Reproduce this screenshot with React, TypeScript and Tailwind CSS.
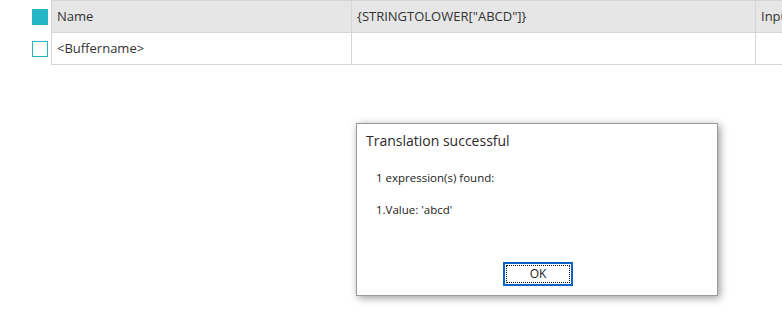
const App = () => {
  return (
    <div
      className="relative w-[782px] h-[320px] overflow-hidden bg-white text-[#333]"
      style={{ fontFamily: '"Open Sans", "Noto Sans", sans-serif' }}
    >
      {/* grid */}
      <div className="flex">
        <div className="w-[51px] shrink-0 flex flex-col">
          <div className="h-[33px] flex items-center pl-[32px]">
            <div className="w-4 h-4 bg-[#22b6c6]" />
          </div>
          <div className="h-[32px] flex items-center pl-[32px]">
            <div className="w-4 h-4 border border-[#22b6c6] bg-white" />
          </div>
        </div>
        <div className="flex flex-col border-l border-[#d6d6d6] shrink-0">
          <div className="flex h-[33px] bg-[#e6e6e6] border-t border-b border-[#d6d6d6] text-[13px]">
            <div className="w-[300px] px-[5px] flex items-center border-r border-[#d6d6d6]">Name</div>
            <div className="w-[404px] px-[5px] flex items-center border-r border-[#d6d6d6]">
              {'{STRINGTOLOWER["ABCD"]}'}
            </div>
            <div className="w-[120px] px-[5px] flex items-center">Input</div>
          </div>
          <div className="flex h-[32px] border-b border-[#d6d6d6] text-[13px]">
            <div className="w-[300px] px-[5px] flex items-center border-r border-[#d6d6d6]">
              {"<Buffername>"}
            </div>
            <div className="w-[404px] border-r border-[#d6d6d6]" />
            <div className="w-[120px]" />
          </div>
        </div>
      </div>

      {/* dialog */}
      <div className="absolute left-[356px] top-[123px] w-[362px] h-[173px] bg-white border border-[#9a9a9a] shadow-[2px_2px_8px_rgba(0,0,0,0.4)] flex flex-col">
        <div className="pl-[9px] pt-[6px] text-[14px] text-[#2b2b2b]">Translation successful</div>
        <div className="pl-[19px] pt-[18px] text-[11.5px] text-[#222] flex flex-col gap-[15px]">
          <div>1 expression(s) found:</div>
          <div>1.Value: 'abcd'</div>
        </div>
        <div className="mt-auto mb-[9px] flex justify-center pl-[2px]">
          <button className="w-[70px] h-[24px] border-2 border-[#0b64c3] bg-white p-[1px]">
            <div className="w-full h-full border border-dotted border-[#111] flex items-center justify-center text-[12px] text-[#222] leading-none">
              OK
            </div>
          </button>
        </div>
      </div>
    </div>
  );
};

export default App;
